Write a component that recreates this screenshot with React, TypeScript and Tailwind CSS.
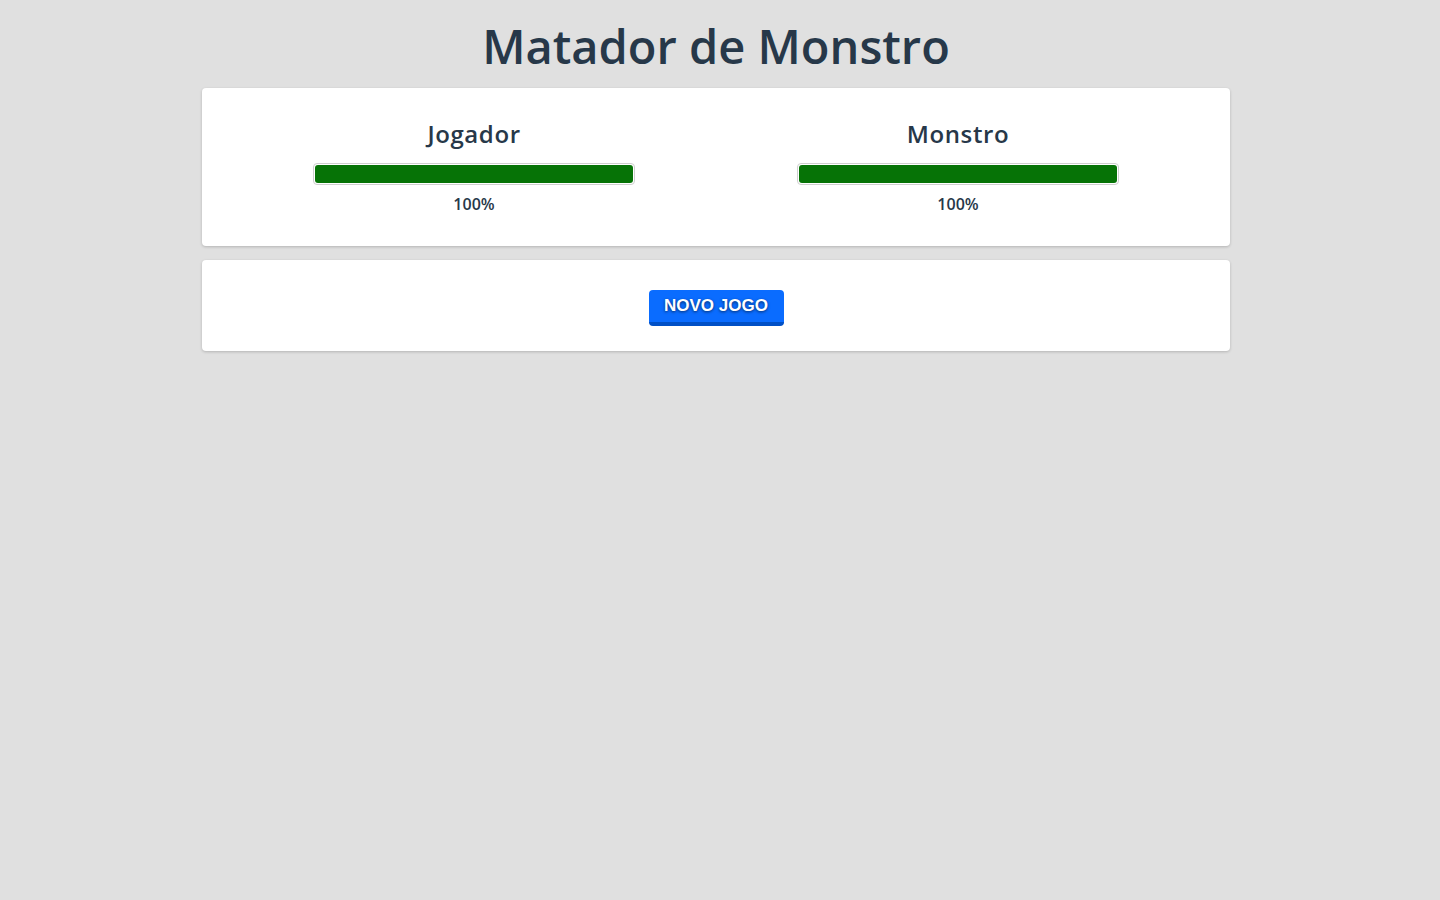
export default function App() {
  const fighters = [
    { name: "Jogador", life: 100 },
    { name: "Monstro", life: 100 },
  ];

  return (
    <div className="min-h-screen bg-[#e0e0e0] pr-[8px] font-['Open_Sans','Noto_Sans',sans-serif] text-[#273849]">
      <h1 className="pt-[14px] text-center text-[47px] font-semibold leading-[64px]">Matador de Monstro</h1>

      <div className="mx-auto mt-[10px] w-[1028px] space-y-[14px]">
        {/* painel de vida */}
        <div className="flex rounded bg-white px-[30px] pt-[30px] pb-[30px] shadow-[0_1px_3px_rgba(0,0,0,0.2)]">
          {fighters.map((f) => (
            <div key={f.name} className="flex flex-1 flex-col items-center">
              <h2 className="text-[24px] font-semibold leading-[32px] tracking-[0.6px]">{f.name}</h2>
              <div className="mt-[13px] h-[22px] w-2/3 rounded border border-[#cfcfcf] bg-white p-px">
                <div className="h-full rounded-[3px] bg-[#067306]" style={{ width: `${f.life}%` }} />
              </div>
              <span className="mt-[7px] text-[16px] font-semibold leading-[24px]">{f.life}%</span>
            </div>
          ))}
        </div>

        {/* controles */}
        <div className="flex justify-center rounded bg-white pt-[30px] pb-[25px] shadow-[0_1px_3px_rgba(0,0,0,0.2)]">
          <button
            type="button"
            className="h-[36px] w-[135px] rounded border-b-4 border-[#0150c6] bg-[#0a6cff] font-['Liberation_Sans',Arial,sans-serif] text-[17px] font-bold text-white [text-shadow:0_1px_3px_rgba(0,0,0,0.6)]"
          >
            NOVO JOGO
          </button>
        </div>
      </div>
    </div>
  );
}
